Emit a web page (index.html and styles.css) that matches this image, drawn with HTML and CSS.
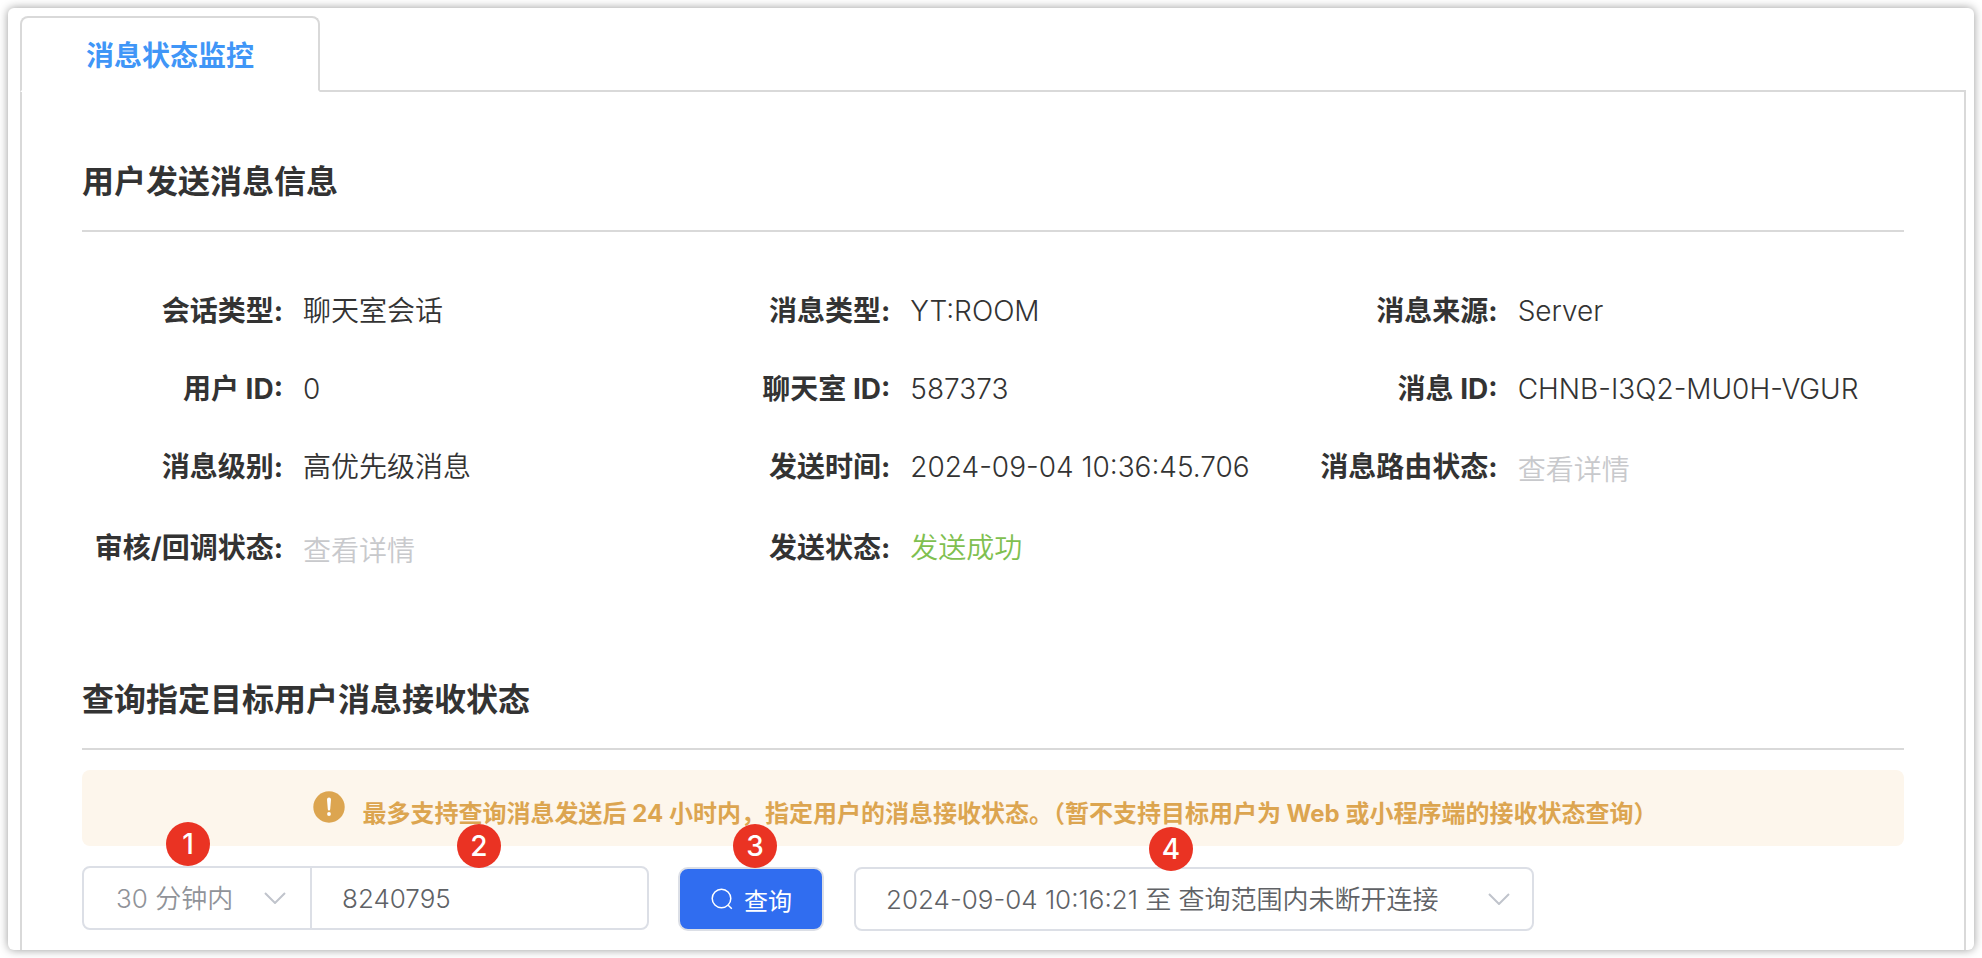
FILE: index.html
```html
<!DOCTYPE html>
<html lang="zh-CN">
<head>
<meta charset="utf-8">
<meta name="viewport" content="width=device-width, initial-scale=1">
<title>消息状态监控</title>
<link rel="stylesheet" href="styles.css">
</head>
<body>
<main class="card">
  <div class="tabs" role="tablist">
    <button class="tab" type="button" role="tab" aria-selected="true">消息状态监控</button>
  </div>
  <div class="panel" role="tabpanel">
    <section>
      <h2 class="title">用户发送消息信息</h2>
      <dl class="info">
        <div class="item"><dt>会话类型:</dt><dd>聊天室会话</dd></div>
        <div class="item"><dt>消息类型:</dt><dd>YT:ROOM</dd></div>
        <div class="item"><dt>消息来源:</dt><dd>Server</dd></div>
        <div class="item"><dt>用户 ID:</dt><dd>0</dd></div>
        <div class="item"><dt>聊天室 ID:</dt><dd>587373</dd></div>
        <div class="item"><dt>消息 ID:</dt><dd>CHNB-I3Q2-MU0H-VGUR</dd></div>
        <div class="item"><dt>消息级别:</dt><dd>高优先级消息</dd></div>
        <div class="item"><dt>发送时间:</dt><dd>2024-09-04 10:36:45.706</dd></div>
        <div class="item"><dt>消息路由状态:</dt><dd class="detail"><button class="link" type="button" disabled>查看详情</button></dd></div>
        <div class="item"><dt>审核/回调状态:</dt><dd class="detail"><button class="link" type="button" disabled>查看详情</button></dd></div>
        <div class="item"><dt>发送状态:</dt><dd class="success">发送成功</dd></div>
      </dl>
    </section>
    <section class="query">
      <h2 class="title">查询指定目标用户消息接收状态</h2>
      <div class="alert" role="alert">
        <svg class="alert-icon" viewBox="0 0 32 32" aria-hidden="true">
          <circle cx="16" cy="16" r="15.7" fill="#dca550"/>
          <path d="M14 8.6a2 2 0 0 1 4 0l-.8 9.6a1.2 1.2 0 0 1-2.4 0z" fill="#fff"/>
          <circle cx="16" cy="23" r="1.9" fill="#fff"/>
        </svg>
        <p class="alert-text">最多支持查询消息发送后 24 小时内，指定用户的消息接收状态。（暂不支持目标用户为 Web 或小程序端的接收状态查询）</p>
      </div>
      <form class="form" onsubmit="return false">
        <div class="group">
          <div class="field range">
            <select class="select" aria-label="时间范围"><option>30 分钟内</option></select>
            <svg class="chevron" viewBox="0 0 22 12" aria-hidden="true"><path d="M1 1l10 10L21 1"/></svg>
            <span class="badge">1</span>
          </div>
          <div class="field user">
            <input class="input" type="text" value="8240795" aria-label="目标用户 ID">
            <span class="badge badge-user">2</span>
          </div>
        </div>
        <div class="field low">
          <button class="submit" type="submit">
            <svg class="search" viewBox="0 0 24 24" aria-hidden="true"><circle cx="11.5" cy="11.5" r="9.3"/><path d="M18.2 18.2l3.6 3.6"/></svg>
            查询
          </button>
          <span class="badge badge-submit">3</span>
        </div>
        <div class="field low session">
          <select class="select boxed" aria-label="在线时段"><option>2024-09-04 10:16:21 至 查询范围内未断开连接</option></select>
          <svg class="chevron" viewBox="0 0 22 12" aria-hidden="true"><path d="M1 1l10 10L21 1"/></svg>
          <span class="badge badge-session">4</span>
        </div>
      </form>
    </section>
  </div>
</main>
</body>
</html>
```
FILE: styles.css
```css
* {
  box-sizing: border-box;
}

body {
  margin: 0;
  padding: 8px;
  background: #fff;
  color: #333;
  font-family: Inter, "Noto Sans CJK SC", sans-serif;
  font-size: 28px;
}

button,
input,
select {
  margin: 0;
  font-family: inherit;
}

.card {
  display: flex;
  flex-direction: column;
  min-height: calc(100vh - 16px);
  padding: 8px 8px 0 12px;
  border-radius: 6px;
  background: #fff;
  box-shadow: 0 0 10px rgba(0, 0, 0, 0.4);
}

.tabs {
  display: flex;
}

.tab {
  position: relative;
  z-index: 1;
  height: 76px;
  margin-bottom: -2px;
  padding: 4px 64px 0;
  border: 2px solid #d9d9d9;
  border-bottom-color: #fff;
  border-radius: 8px 8px 0 0;
  background: #fff;
  color: #4096f7;
  font-size: 28px;
  font-weight: 700;
  line-height: 38px;
}

.panel {
  flex: 1;
  padding: 65px 60px 16px;
  border: 2px solid #d9d9d9;
  border-bottom: 0;
}

.title {
  margin: 0;
  padding-bottom: 23px;
  border-bottom: 2px solid #d9d9d9;
  font-size: 32px;
  font-weight: 700;
  line-height: 50px;
}

.info {
  display: grid;
  grid-template-columns: repeat(3, 1fr);
  row-gap: 40px;
  margin: 0;
  padding-top: 60px;
  line-height: 38px;
}

.item {
  display: flex;
  gap: 20px;
  white-space: nowrap;
}

.item dt {
  flex: 0 0 201px;
  display: flex;
  justify-content: flex-end;
  white-space: pre;
  font-weight: 700;
}

.item dd {
  margin: 0;
  font-weight: 350;
}

.item .detail {
  display: flex;
  padding-top: 3px;
}

.link {
  padding: 0;
  border: 0;
  background: none;
  color: #c8c9cc;
  font-size: 28px;
  font-weight: 350;
  line-height: 38px;
}

.item .success {
  color: #7fc050;
}

.query {
  padding-top: 105px;
}

.alert {
  display: flex;
  justify-content: center;
  gap: 18px;
  margin: 20px 0;
  padding: 21px 32px 16px 16px;
  border-radius: 8px;
  background: #fdf6ec;
  color: #dca550;
}

.alert-icon {
  flex: none;
  width: 32px;
  height: 32px;
}

.alert-text {
  margin: 7px 0 0;
  font-size: 24px;
  font-weight: 700;
  line-height: 32px;
}

.form {
  display: flex;
  align-items: flex-start;
}

.group {
  display: flex;
  flex: 0 1 567px;
  margin-right: 29px;
  border: 2px solid #dcdfe6;
  border-radius: 8px;
}

.field {
  position: relative;
}

.low {
  margin-top: 1px;
}

.range {
  flex: 0 0 228px;
  border-right: 2px solid #dcdfe6;
}

.user {
  flex: 1;
}

.select,
.input {
  display: block;
  width: 100%;
  height: 60px;
  padding: 0 32px;
  border: 0;
  border-radius: 8px;
  outline: 0;
  background: transparent;
  color: #606266;
  font-size: 26px;
  font-weight: 350;
  appearance: none;
}

.input {
  padding: 0 30px;
}

.range .select {
  color: #909399;
}

.boxed {
  height: 64px;
  padding: 0 30px;
  border: 2px solid #dcdfe6;
}

.session {
  flex: 0 1 680px;
  margin-left: 30px;
}

.chevron {
  position: absolute;
  top: calc(50% - 6px);
  right: 24px;
  width: 22px;
  height: 12px;
  fill: none;
  stroke: #c0c4cc;
  stroke-width: 2;
  pointer-events: none;
}

.submit {
  display: flex;
  align-items: center;
  gap: 10px;
  height: 64px;
  padding: 0 30px;
  border: 2px solid #dcdfe6;
  border-radius: 10px;
  background: #306df0;
  color: #fff;
  font-size: 24px;
  font-weight: 400;
}

.search {
  width: 24px;
  height: 24px;
  fill: none;
  stroke: #fff;
  stroke-width: 1.5;
}

.badge {
  position: absolute;
  top: -46px;
  left: 82px;
  width: 44px;
  height: 44px;
  border-radius: 50%;
  background: #ea3323;
  color: #fff;
  font-size: 28px;
  font-weight: 500;
  line-height: 44px;
  text-align: center;
}

.badge-user {
  top: -44px;
  left: 145px;
}

.badge-submit {
  top: -43px;
  left: 55px;
}

.badge-session {
  top: -40px;
  left: 295px;
}
```
